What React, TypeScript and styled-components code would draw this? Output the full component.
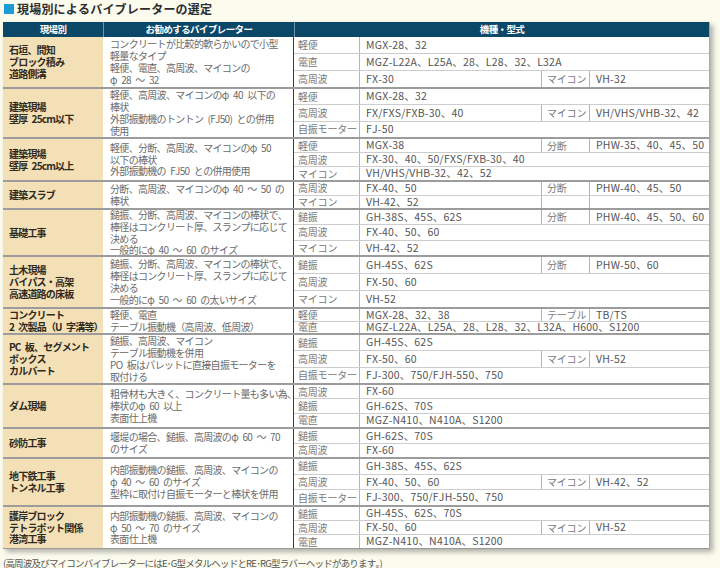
import React from 'react';
import styled, { createGlobalStyle } from 'styled-components';

type ItemType = {
    label: string
    model: string
    sub?: [string, string]
}

type RowType = {
    site: string[]
    desc: string[]
    height: number
    items: ItemType[]
}

const rows: RowType[] = [
    {
        site: ['石垣、間知', 'ブロック積み', '道路側溝'],
        desc: ['コンクリートが比較的軟らかいので小型', '軽量なタイプ', '軽便、電直、高周波、マイコンの', 'φ 28 ～ 32'],
        height: 50,
        items: [
            { label: '軽便', model: 'MGX-28、32' },
            { label: '電直', model: 'MGZ-L22A、L25A、28、L28、32、L32A' },
            { label: '高周波', model: 'FX-30', sub: ['マイコン', 'VH-32'] },
        ],
    },
    {
        site: ['建築現場', '壁厚 25cm以下'],
        desc: ['軽便、高周波、マイコンのφ 40 以下の', '棒状', '外部振動機のトントン (FJ50) との併用', '使用'],
        height: 50,
        items: [
            { label: '軽便', model: 'MGX-28、32' },
            { label: '高周波', model: 'FX/FXS/FXB-30、40', sub: ['マイコン', 'VH/VHS/VHB-32、42'] },
            { label: '自振モーター', model: 'FJ-50' },
        ],
    },
    {
        site: ['建築現場', '壁厚 25cm以上'],
        desc: ['軽便、分断、高周波、マイコンのφ 50', '以下の棒状', '外部振動機の FJ50 との併用使用'],
        height: 43,
        items: [
            { label: '軽便', model: 'MGX-38', sub: ['分断', 'PHW-35、40、45、50'] },
            { label: '高周波', model: 'FX-30、40、50/FXS/FXB-30、40' },
            { label: 'マイコン', model: 'VH/VHS/VHB-32、42、52' },
        ],
    },
    {
        site: ['建築スラブ'],
        desc: ['分断、高周波、マイコンのφ 40 ～ 50 の', '棒状'],
        height: 28,
        items: [
            { label: '高周波', model: 'FX-40、50', sub: ['分断', 'PHW-40、45、50'] },
            { label: 'マイコン', model: 'VH-42、52', sub: ['', ''] },
        ],
    },
    {
        site: ['基礎工事'],
        desc: ['鎚振、分断、高周波、マイコンの棒状で、', '棒径はコンクリート厚、スランプに応じて', '決める', '一般的にφ 40 ～ 60 のサイズ'],
        height: 47,
        items: [
            { label: '鎚振', model: 'GH-38S、45S、62S', sub: ['分断', 'PHW-40、45、50、60'] },
            { label: '高周波', model: 'FX-40、50、60' },
            { label: 'マイコン', model: 'VH-42、52' },
        ],
    },
    {
        site: ['土木現場', 'バイパス・高架', '高速道路の床板'],
        desc: ['鎚振、分断、高周波、マイコンの棒状で、', '棒径はコンクリート厚、スランプに応じて', '決める', '一般的にφ 50 ～ 60 の太いサイズ'],
        height: 52,
        items: [
            { label: '鎚振', model: 'GH-45S、62S', sub: ['分断', 'PHW-50、60'] },
            { label: '高周波', model: 'FX-50、60' },
            { label: 'マイコン', model: 'VH-52' },
        ],
    },
    {
        site: ['コンクリート', '2 次製品（U 字溝等）'],
        desc: ['軽便、電直', 'テーブル振動機（高周波、低周波）'],
        height: 26,
        items: [
            { label: '軽便', model: 'MGX-28、32、38', sub: ['テーブル', 'TB/TS'] },
            { label: '電直', model: 'MGZ-L22A、L25A、28、L28、32、L32A、H600、S1200' },
        ],
    },
    {
        site: ['PC 板、セグメント', 'ボックス', 'カルバート'],
        desc: ['鎚振、高周波、マイコン', 'テーブル振動機を併用', 'PO 板はパレットに直接自振モーターを', '取付ける'],
        height: 50,
        items: [
            { label: '鎚振', model: 'GH-45S、62S' },
            { label: '高周波', model: 'FX-50、60', sub: ['マイコン', 'VH-52'] },
            { label: '自振モーター', model: 'FJ-300、750/FJH-550、750' },
        ],
    },
    {
        site: ['ダム現場'],
        desc: ['粗骨材も大きく、コンクリート量も多い為、', '棒状のφ 60 以上', '表面仕上機'],
        height: 44,
        items: [
            { label: '高周波', model: 'FX-60' },
            { label: '鎚振', model: 'GH-62S、70S' },
            { label: '電直', model: 'MGZ-N410、N410A、S1200' },
        ],
    },
    {
        site: ['砂防工事'],
        desc: ['堰堤の場合、鎚振、高周波のφ 60 ～ 70', 'のサイズ'],
        height: 30,
        items: [
            { label: '鎚振', model: 'GH-62S、70S' },
            { label: '高周波', model: 'FX-60' },
        ],
    },
    {
        site: ['地下鉄工事', 'トンネル工事'],
        desc: ['内部振動機の鎚振、高周波、マイコンの', 'φ 40 ～ 60 のサイズ', '型枠に取付け自振モーターと棒状を併用'],
        height: 48,
        items: [
            { label: '鎚振', model: 'GH-38S、45S、62S' },
            { label: '高周波', model: 'FX-40、50、60', sub: ['マイコン', 'VH-42、52'] },
            { label: '自振モーター', model: 'FJ-300、750/FJH-550、750' },
        ],
    },
    {
        site: ['護岸ブロック', 'テトラポット関係', '港湾工事'],
        desc: ['内部振動機の鎚振、高周波、マイコンの', 'φ 50 ～ 70 のサイズ', '表面仕上機'],
        height: 43,
        items: [
            { label: '鎚振', model: 'GH-45S、62S、70S' },
            { label: '高周波', model: 'FX-50、60', sub: ['マイコン', 'VH-52'] },
            { label: '電直', model: 'MGZ-N410、N410A、S1200' },
        ],
    },
];

// widen the narrow spaces of the tight-set Japanese lines
const wide = (s: string) => s.replace(/ /g, '\u2002');

const App = () => {
    return (
        <Page>
            <GlobalStyle />
            <Title>
                <TitleMark />
                現場別によるバイブレーターの選定
            </Title>
            <Table>
                <Header>
                    <HeaderCell>現場別</HeaderCell>
                    <HeaderCell>お勧めするバイブレーター</HeaderCell>
                    <HeaderCell>機種・型式</HeaderCell>
                </Header>
                {rows.map((row, i) => (
                    <Row key={i} $h={row.height} $first={i === 0}>
                        <Site>
                            {row.site.map((s, j) => <div key={j}>{wide(s)}</div>)}
                        </Site>
                        <Desc>
                            {row.desc.map((d, j) => <div key={j}>{wide(d)}</div>)}
                        </Desc>
                        <Models>
                            {row.items.map((item, j) => (
                                <SubRow key={j} $split={!!item.sub}>
                                    <Label>{item.label}</Label>
                                    <Model>{item.model}</Model>
                                    {item.sub && <SubLabel>{item.sub[0]}</SubLabel>}
                                    {item.sub && <Model>{item.sub[1]}</Model>}
                                </SubRow>
                            ))}
                        </Models>
                    </Row>
                ))}
            </Table>
            <Note>(高周波及びマイコンバイブレーターにはE･G型メタルヘッドとRE･RG型ラバーヘッドがあります。)</Note>
        </Page>
    );
};

export default App;

const GlobalStyle = createGlobalStyle`
    body {
        margin: 0;
        background: #fbfbee;
        font-family: "Noto Sans CJK JP", "Noto Sans", sans-serif;
        font-kerning: none;
    }
`

const Page = styled.div`
    width: 720px;
    height: 568px;
    padding: 0 0 0 3px;
    box-sizing: border-box;
    overflow: hidden;
`

const Title = styled.div`
    display: flex;
    align-items: center;
    gap: 3px;
    height: 18px;
    margin-bottom: 4px;
    padding-left: 1px;
    font-size: 12px;
    font-weight: 700;
    line-height: 1;
    letter-spacing: 0.2px;
    color: #2d2d2d;
`

const TitleMark = styled.span`
    width: 10px;
    height: 10px;
    background: #1b9bd7;
`

const Table = styled.div`
    width: 707px;
    background: #fff;
    border-right: 1px solid #a8a8a8;
    border-bottom: 1px solid #9a9a9a;
    box-sizing: border-box;
    box-shadow: 3px 3px 5px rgba(0, 0, 0, 0.3);
`

const Header = styled.div`
    display: grid;
    grid-template-columns: 100px 191px 1fr;
    height: 15px;
    background: #0b4766;
`

const HeaderCell = styled.div`
    display: flex;
    align-items: center;
    justify-content: center;
    color: #fff;
    font-size: 9.5px;
    font-weight: 700;
    line-height: 1;
    letter-spacing: -0.6px;
    & + & {
        border-left: 1px solid #6f93a8;
    }
`

const Row = styled.div<{ $h: number, $first: boolean }>`
    display: grid;
    grid-template-columns: 100px 191px 1fr;
    height: ${props => props.$h}px;
    box-sizing: border-box;
    overflow: hidden;
    border-top: ${props => props.$first ? 'none' : '2px solid #9c9c9c'};
`

const Site = styled.div`
    display: flex;
    flex-direction: column;
    justify-content: center;
    padding-left: 6px;
    background: #f3e0b7;
    color: #2f2a20;
    font-size: 10px;
    font-weight: 700;
    line-height: 11.8px;
    letter-spacing: -0.8px;
    white-space: nowrap;
`

const Desc = styled.div`
    display: flex;
    flex-direction: column;
    justify-content: center;
    padding-left: 7px;
    border-right: 1px solid #3a3a3a;
    color: #6b6b6b;
    font-size: 10px;
    line-height: 11.8px;
    letter-spacing: -0.68px;
    white-space: nowrap;
    overflow: hidden;
`

const Models = styled.div`
    display: flex;
    flex-direction: column;
    min-height: 0;
`

const SubRow = styled.div<{ $split: boolean }>`
    flex: 1 1 0;
    min-height: 0;
    display: grid;
    grid-template-columns: ${props => props.$split ? '66px 182px 48px 1fr' : '66px 1fr'};
    & + & {
        border-top: 1px solid #cdcdcd;
    }
`

const Label = styled.div`
    display: flex;
    align-items: center;
    padding-left: 4px;
    border-right: 1px solid #b4b4b4;
    color: #7a7a7a;
    font-size: 10px;
    line-height: 1;
    letter-spacing: -0.2px;
    white-space: nowrap;
    overflow: hidden;
`

const SubLabel = styled(Label)`
    border-left: 1px solid #b4b4b4;
    margin-left: -1px;
    padding-left: 5px;
`

const Model = styled.div`
    display: flex;
    align-items: center;
    padding-left: 6px;
    color: #555;
    font-size: 10.5px;
    line-height: 1;
    letter-spacing: 0.2px;
    white-space: nowrap;
    overflow: hidden;
`

const Note = styled.div`
    margin-top: 8px;
    color: #555;
    font-size: 9.5px;
    line-height: 12px;
    letter-spacing: -0.8px;
`
